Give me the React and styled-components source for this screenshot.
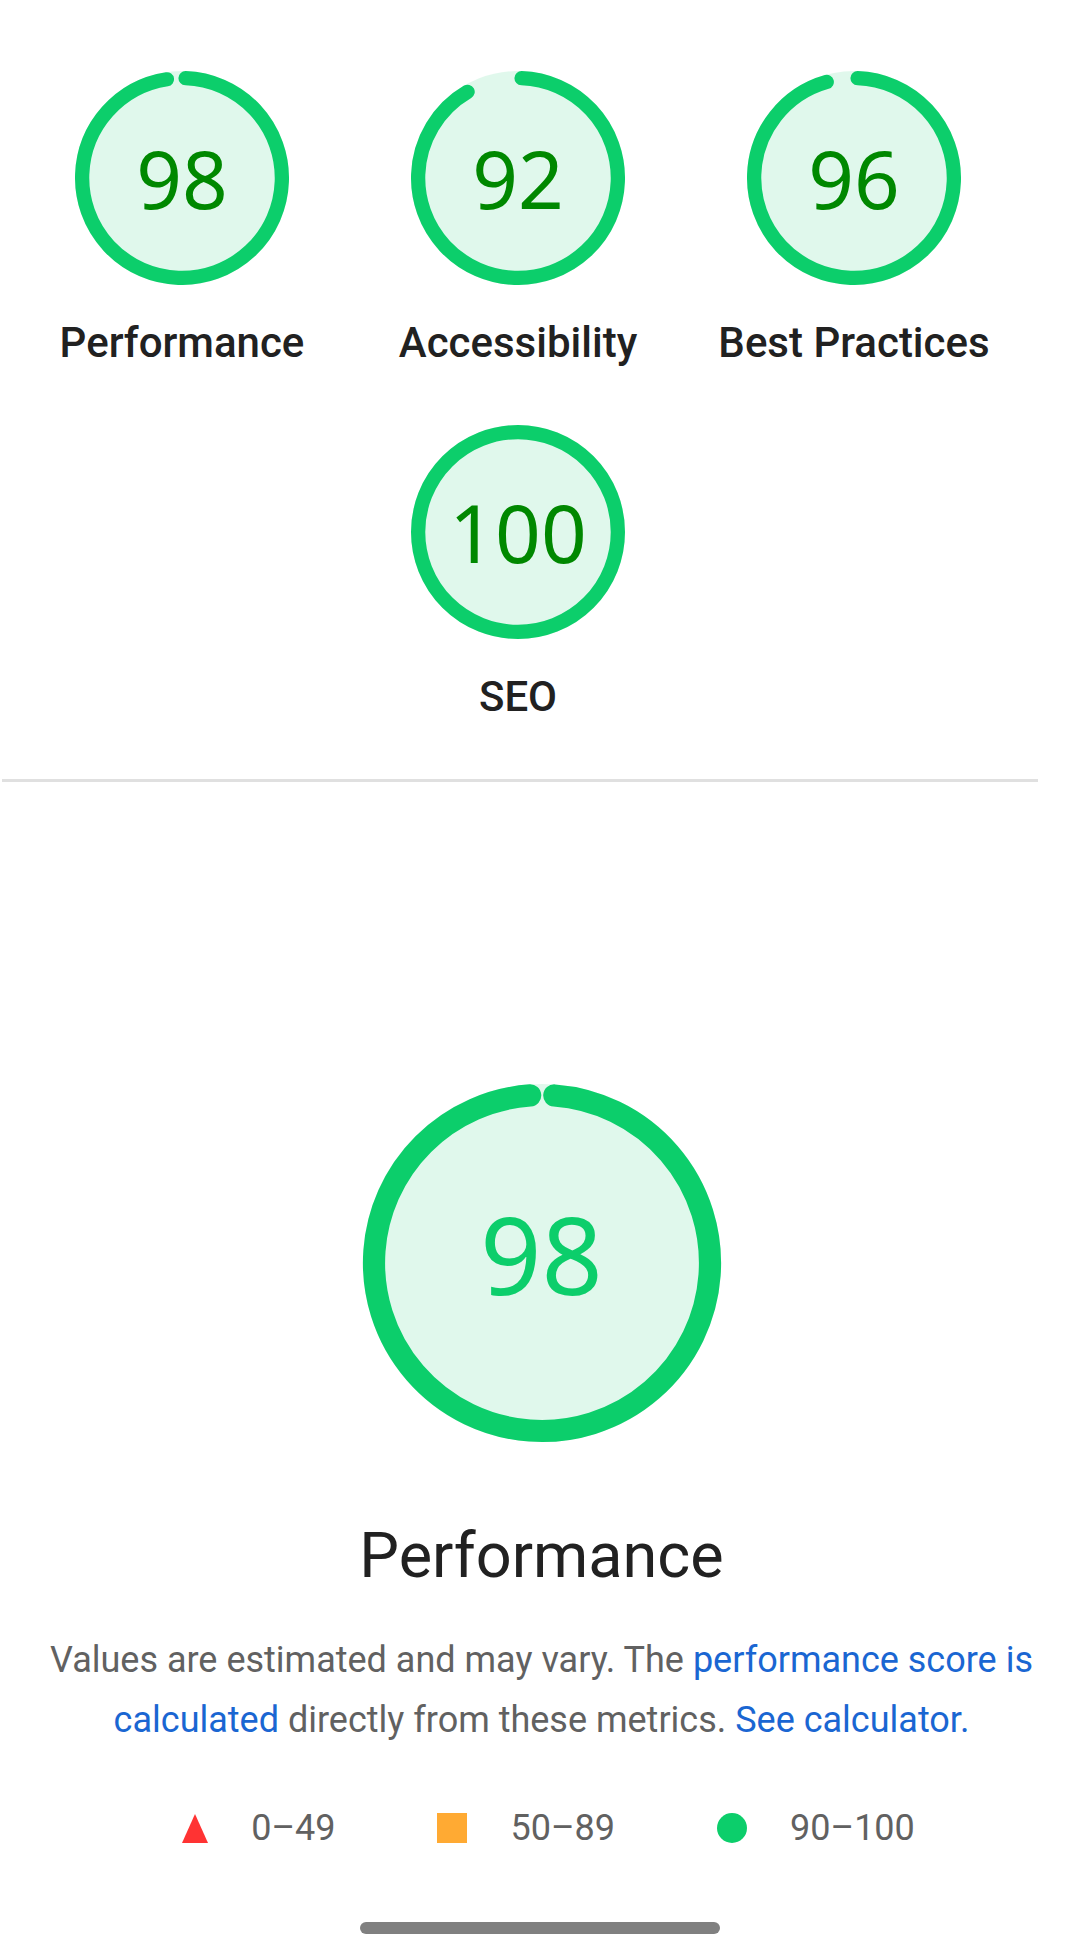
import React from "react";
import styled, { createGlobalStyle } from "styled-components";

const PASS = "#0cce6b";
const R = 56;
const CIRC = 2 * Math.PI * R;

const categories = [
  { score: 98, label: "Performance" },
  { score: 92, label: "Accessibility" },
  { score: 96, label: "Best Practices" },
  { score: 100, label: "SEO" },
];

// same maths as the lighthouse report gauge, the big one closes the gap a bit more
const arcFor = (score, sw, tight) => {
  const p = score / 100;
  if (p >= 1) return { len: CIRC, rot: -90 };
  if (tight) {
    const gap = 0.8;
    return { len: CIRC - sw - gap, rot: -90 + ((gap / 2 + sw / 2) / CIRC) * 360 };
  }
  return { len: p * CIRC - sw / 2, rot: ((0.25 * sw) / CIRC) * 360 - 90 };
};

const Gauge = ({ score, size, sw, tight, children }) => {
  const { len, rot } = arcFor(score, sw, tight);
  return (
    <GaugeBox $size={size}>
      <svg viewBox="0 0 120 120" width={size} height={size}>
        <circle cx="60" cy="60" r={R} fill={PASS} stroke={PASS} strokeWidth={sw} opacity="0.12" />
        <circle
          cx="60"
          cy="60"
          r={R}
          fill="none"
          stroke={PASS}
          strokeWidth={sw}
          strokeLinecap="round"
          strokeDasharray={`${len} ${CIRC}`}
          transform={`rotate(${rot} 60 60)`}
        />
      </svg>
      {children}
    </GaugeBox>
  );
};

export default function App() {
  return (
    <Page>
      <GlobalStyle />
      <ScoresHeader>
        {categories.map((c) => (
          <GaugeItem key={c.label}>
            <Gauge score={c.score} size={214} sw={8}>
              <Percent>{c.score}</Percent>
            </Gauge>
            <GaugeLabel>{c.label}</GaugeLabel>
          </GaugeItem>
        ))}
      </ScoresHeader>
      <Divider />
      <CategoryHeader>
        <Gauge score={98} size={360} sw={7.4} tight>
          <Percent $big>98</Percent>
        </Gauge>
        <CategoryTitle>Performance</CategoryTitle>
        <Description>
          Values are estimated and may vary. The <a href="#">performance score is calculated</a>{" "}
          directly from these metrics. <a href="#">See calculator.</a>
        </Description>
        <Legend>
          <LegendItem>
            <svg width="26" height="29" viewBox="0 0 26 29">
              <polygon points="13,0 26,29 0,29" fill="#ff3333" />
            </svg>
            <span>0–49</span>
          </LegendItem>
          <LegendItem>
            <Square />
            <span>50–89</span>
          </LegendItem>
          <LegendItem>
            <Dot />
            <span>90–100</span>
          </LegendItem>
        </Legend>
      </CategoryHeader>
      <HomeBar />
    </Page>
  );
}

const GlobalStyle = createGlobalStyle`
  html, body {
    margin: 0;
    padding: 0;
    background: #fff;
  }
  body {
    font-family: Roboto, "Noto Sans", sans-serif;
    color: #212121;
    overflow: hidden;
  }
`;

const Page = styled.div`
  width: 1080px;
  height: 1955px;
  display: flex;
  flex-direction: column;
`;

const ScoresHeader = styled.div`
  width: 1036px;
  display: flex;
  flex-wrap: wrap;
  justify-content: center;
  padding-top: 71px;
`;

const GaugeItem = styled.div`
  width: 336px;
  display: flex;
  flex-direction: column;
  align-items: center;
  padding-bottom: 57px;
`;

const GaugeBox = styled.div`
  display: grid;
  width: ${(p) => p.$size}px;
  height: ${(p) => p.$size}px;
  place-items: center;

  & > * {
    grid-area: 1 / 1;
  }
  svg {
    display: block;
  }
`;

const Percent = styled.div`
  font-family: "Noto Sans", sans-serif;
  font-size: ${(p) => (p.$big ? 107 : 80)}px;
  line-height: 1;
  color: ${(p) => (p.$big ? PASS : "#008800")};
  padding-bottom: ${(p) => (p.$big ? 20 : 0)}px;
`;

const GaugeLabel = styled.div`
  margin-top: 33px;
  font-size: 42px;
  line-height: 50px;
  font-weight: 500;
  color: #212121;
  text-align: center;
  white-space: nowrap;
`;

const Divider = styled.hr`
  margin: 0 0 0 2px;
  width: 1036px;
  height: 3px;
  border: 0;
  background: #e0e0e0;
`;

const CategoryHeader = styled.section`
  display: flex;
  flex-direction: column;
  align-items: center;
  padding-top: 301px;
  padding-left: 3px;
`;

const CategoryTitle = styled.h2`
  margin: 77px 0 0;
  font-size: 63px;
  line-height: 72px;
  font-weight: 400;
  color: #212121;
`;

const Description = styled.p`
  margin: 38px 0 0;
  max-width: 1000px;
  font-size: 36px;
  line-height: 60px;
  text-align: center;
  color: #616161;

  a {
    color: #1a66d2;
    text-decoration: none;
  }
`;

const Legend = styled.div`
  margin-top: 58px;
  height: 40px;
  display: flex;
  align-items: center;
  gap: 102px;
  padding-left: 14px;
`;

const LegendItem = styled.div`
  display: flex;
  align-items: center;
  gap: 43px;
  font-size: 36px;
  line-height: 40px;
  color: #616161;

  svg {
    display: block;
  }
`;

const Square = styled.div`
  width: 30px;
  height: 30px;
  background: #ffaa33;
`;

const Dot = styled.div`
  width: 30px;
  height: 30px;
  border-radius: 50%;
  background: ${PASS};
`;

const HomeBar = styled.div`
  margin: 74px auto 0;
  width: 360px;
  height: 12px;
  border-radius: 6px;
  background: #808080;
`;
